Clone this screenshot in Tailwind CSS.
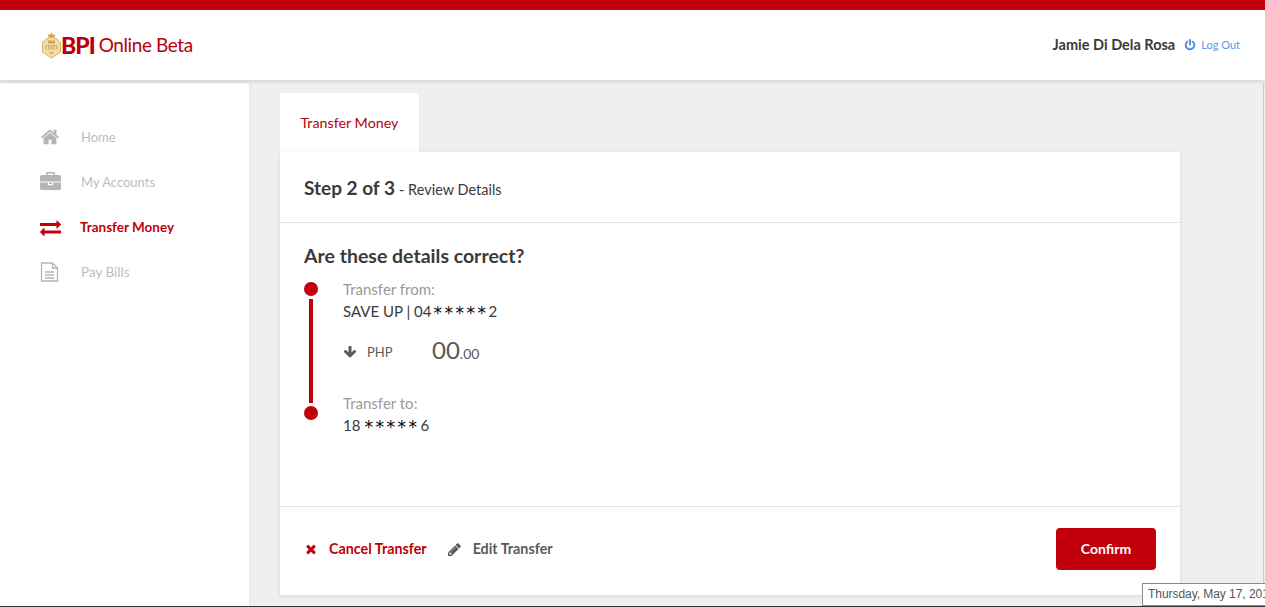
<!DOCTYPE html>
<html lang="en">
<head>
    <meta charset="UTF-8">
    <meta name="viewport" content="width=device-width, initial-scale=1.0">
    <title>BPI Online Beta</title>
    <script src="https://cdn.jsdelivr.net/npm/@tailwindcss/browser@4"></script>
</head>
<body class="h-[607px] overflow-hidden bg-[#efefef] font-['Lato','Noto_Sans',sans-serif] text-[#3a3a3a]">
    <div class="relative flex h-[607px] flex-col border-b border-[#333]">
        <!-- Header -->
        <header class="relative z-10 flex h-[80px] shrink-0 items-center justify-between border-t-[10px] border-[#c1000b] bg-white pl-[42px] pr-[25px] shadow-[0_1px_4px_rgba(0,0,0,0.15)]">
            <div class="flex items-center">
                <svg class="h-[27px] w-[19px]" viewBox="0 0 19 27">
                    <path d="M6.500 5L5.800 2l2 1L9.500 .8 11.200 3l2-1-.7 3z" fill="#d6a640"/>
                    <path d="M3.500 7.500c2-1.500 3.500-2 6-2s4 .5 6 2l3 3.500v9l-9 6-9-6v-9z" fill="#f1deb0" stroke="#d0a650" stroke-width=".9"/>
                    <path d="M6 8.500h7v3H6z" fill="#d2a84f"/>
                    <path d="M3.500 13h12v4.500h-12z" fill="#d9b468"/>
                    <path d="M5.500 14v3M8 14v3M11 14v3M13.500 14v3" stroke="#f6ebcf" stroke-width=".8"/>
                    <path d="M6.500 20h6l-3 2.500z" fill="#d9b468"/>
                </svg>
                <span class="text-[23px] font-black tracking-[-1px] text-[#b8000a]">BPI</span>
                <span class="ml-[4px] text-[19px] tracking-[-0.4px] text-[#b8000a]">Online Beta</span>
            </div>
            <div class="flex items-center">
                <span class="text-[14.500px] font-bold">Jamie Di Dela Rosa</span>
                <svg class="ml-[9px] h-[12px] w-[12px] text-[#3f88e0]" viewBox="0 0 12 12" fill="none" stroke="currentColor" stroke-width="1.800" stroke-linecap="round">
                    <path d="M6 1v4.500M3.400 2.600a4.300 4.300 0 1 0 5.200 0"/>
                </svg>
                <span class="ml-[5px] text-[11px] text-[#5a9be8]">Log Out</span>
            </div>
        </header>

        <div class="flex min-h-0 flex-1">
            <!-- Sidebar -->
            <aside class="mt-[3px] w-[249px] shrink-0 bg-white pl-[40px] pt-[42px] shadow-[0_0_3px_rgba(0,0,0,0.08)]">
                <nav class="flex flex-col gap-[21px] text-[13px] text-[#bdbdbd]">
                    <a class="flex h-[24px] items-center">
                        <svg class="h-[20px] w-[20px]" viewBox="0 0 1792 1792" fill="#b5b5b5"><path d="M1472 992v480q0 26-19 45t-45 19h-384v-384h-256v384h-384q-26 0-45-19t-19-45v-480q0-1 .5-3t.5-3l575-474 575 474q1 2 1 6zm223-69l-62 74q-8 9-21 11h-3q-13 0-21-7l-692-577-692 577q-12 8-24 7-13-2-21-11l-62-74q-8-10-7-23.500t11-21.500l719-599q32-26 76-26t76 26l244 204v-195q0-14 9-23t23-9h192q14 0 23 9t9 23v408l219 182q10 8 11 21.500t-7 23.500z"/></svg>
                        <span class="ml-[21px] mt-[2px]">Home</span>
                    </a>
                    <a class="flex h-[24px] items-center">
                        <svg class="h-[21px] w-[21px]" viewBox="0 0 1792 1792" fill="#b5b5b5"><path d="M640 256h512v-128h-512v128zm1152 640v480q0 66-47 113t-113 47h-1472q-66 0-113-47t-47-113v-480h672v160q0 26 19 45t45 19h320q26 0 45-19t19-45v-160h672zm-768 0v128h-256v-128h256zm768-480v384h-1792v-384q0-66 47-113t113-47h352v-160q0-40 28-68t68-28h576q40 0 68 28t28 68v160h352q66 0 113 47t47 113z"/></svg>
                        <span class="ml-[20px] mt-[2px]">My Accounts</span>
                    </a>
                    <a class="flex h-[24px] items-center text-[#c1000b]">
                        <svg class="h-[21px] w-[21px]" viewBox="0 0 1792 1792" fill="#c1000b"><path d="M1792 1184v192q0 13-9.500 22.500t-22.500 9.500h-1376v192q0 13-9.500 22.500t-22.500 9.500q-12 0-24-10l-319-320q-9-9-9-22 0-14 9-23l320-320q9-9 23-9 13 0 22.500 9.500t9.500 22.500v192h1376q13 0 22.500 9.500t9.500 22.500zm0-544q0 14-9 23l-320 320q-9 9-23 9-13 0-22.500-9.500t-9.500-22.500v-192h-1376q-13 0-22.500-9.500t-9.500-22.500v-192q0-13 9.500-22.500t22.500-9.500h1376v-192q0-14 9-23t23-9q12 0 24 10l319 319q9 9 9 23z"/></svg>
                        <span class="ml-[19px] text-[13.500px] font-bold">Transfer Money</span>
                    </a>
                    <a class="flex h-[24px] items-center">
                        <svg class="h-[20px] w-[19px]" viewBox="0 0 19 20" fill="none" stroke="#b5b5b5" stroke-width="1.300"><path d="M1.500 1h11l5 5v13h-16zM12.500 1v5h5M5 10h9M5 13h9M5 16h9"/></svg>
                        <span class="ml-[22px] text-[13.500px]">Pay Bills</span>
                    </a>
                </nav>
            </aside>

            <!-- Main -->
            <main class="pl-[31px] pt-[13px]">
                <div class="flex h-[59px] w-[139px] items-center justify-center bg-white text-[14.300px] text-[#b8000a]">Transfer Money</div>
                <section class="flex h-[443px] w-[900px] flex-col bg-white shadow-[0_1px_4px_rgba(0,0,0,0.1)]">
                    <div class="flex h-[71px] shrink-0 items-center border-b border-[#e3e3e3] pl-[24px] pt-[2px]">
                        <span class="text-[19px] font-bold">Step 2 of 3</span>
                        <span class="ml-[4px] mt-[3px] text-[14.500px]">- Review Details</span>
                    </div>
                    <div class="flex-1 pl-[24px] pt-[19px]">
                        <h2 class="text-[19.500px] font-bold leading-[28px]">Are these details correct?</h2>
                        <div class="mt-[8px] flex">
                            <div class="flex w-[14px] flex-col items-center pt-[4px]">
                                <span class="h-[14px] w-[14px] rounded-full bg-[#c1000b]"></span>
                                <span class="my-[3px] h-[104px] w-[4px] bg-[#c1000b]"></span>
                                <span class="h-[14px] w-[14px] rounded-full bg-[#c1000b]"></span>
                            </div>
                            <div class="ml-[25px] text-[15px] leading-[22px]">
                                <div class="text-[15px] text-[#9a9a9a]">Transfer from:</div>
                                <div class="flex h-[22px] items-center">SAVE UP | 04<span class="ml-[2px] mt-[3px] font-['DejaVu_Sans'] text-[17px] leading-[22px] tracking-[2.500px] text-black">*****</span>2</div>
                                <div class="mt-[15px] flex h-[30px] items-center">
                                    <svg class="h-[14px] w-[14px]" viewBox="0 0 1792 1792" fill="#5a5a5a"><path d="M1675 832q0 53-37 90l-651 652q-39 37-91 37-53 0-90-37l-651-652q-38-36-38-90 0-53 38-91l74-75q39-37 91-37 53 0 90 37l294 294v-704q0-52 38-90t90-38h128q52 0 90 38t38 90v704l294-294q37-37 90-37 52 0 91 37l75 75q37 39 37 91z"/></svg>
                                    <span class="ml-[10px] w-[65px] text-[13px] text-[#5a5a5a]">PHP</span>
                                    <span class="text-[24px] text-[#5a5a5a]">00<span class="text-[14px]">.00</span></span>
                                </div>
                                <div class="mt-[25px] text-[15px] text-[#9a9a9a]">Transfer to:</div>
                                <div class="flex h-[22px] items-center">18<span class="ml-[4px] mt-[3px] font-['DejaVu_Sans'] text-[17px] leading-[22px] tracking-[2.500px] text-black">*****</span><span class="ml-[1px]">6</span></div>
                            </div>
                        </div>
                    </div>
                    <div class="flex h-[89px] shrink-0 items-center justify-between border-t border-[#e3e3e3] pb-[4px] pl-[24px] pr-[24px]">
                        <div class="flex items-center text-[14.300px] font-bold">
                            <svg class="h-[14px] w-[14px]" viewBox="0 0 1792 1792" fill="#c1000b"><path d="M1490 1322q0 40-28 68l-136 136q-28 28-68 28t-68-28l-294-294-294 294q-28 28-68 28t-68-28l-136-136q-28-28-28-68t28-68l294-294-294-294q-28-28-28-68t28-68l136-136q28-28 68-28t68 28l294 294 294-294q28-28 68-28t68 28l136 136q28 28 28 68t-28 68l-294 294 294 294q28 28 28 68z"/></svg>
                            <span class="ml-[11px] text-[#c1000b]">Cancel Transfer</span>
                            <svg class="ml-[20px] h-[15px] w-[15px]" viewBox="0 0 1792 1792" fill="#5a5a5a"><path d="M491 1536l91-91-235-235-91 91v107h128v128h107zm523-928q0-22-22-22-10 0-17 7l-542 542q-7 7-7 17 0 22 22 22 10 0 17-7l542-542q7-7 7-17zm-54-192l416 416-832 832h-416v-416zm683 96q0 53-37 90l-166 166-416-416 166-165q36-38 90-38 53 0 91 38l235 234q37 39 37 91z"/></svg>
                            <span class="ml-[11px] text-[#5a5a5a]">Edit Transfer</span>
                        </div>
                        <button class="h-[42px] w-[100px] rounded-[4px] bg-[#c1000b] pb-[2px] text-[14px] font-bold text-white">Confirm</button>
                    </div>
                </section>
            </main>
        </div>

        <!-- Browser tooltip and page edge -->
        <div class="absolute right-[1px] top-[83px] h-[523px] w-px bg-[#c9c9c9]"></div>
        <div class="absolute left-[1142px] top-[583px] h-[23px] w-[140px] whitespace-nowrap border border-[#8a8a8a] bg-white pl-[5px] font-['Liberation_Sans'] text-[12px] leading-[21px] tracking-[-0.050px] text-[#555]">Thursday, May 17, 2018</div>
    </div>
</body>
</html>
